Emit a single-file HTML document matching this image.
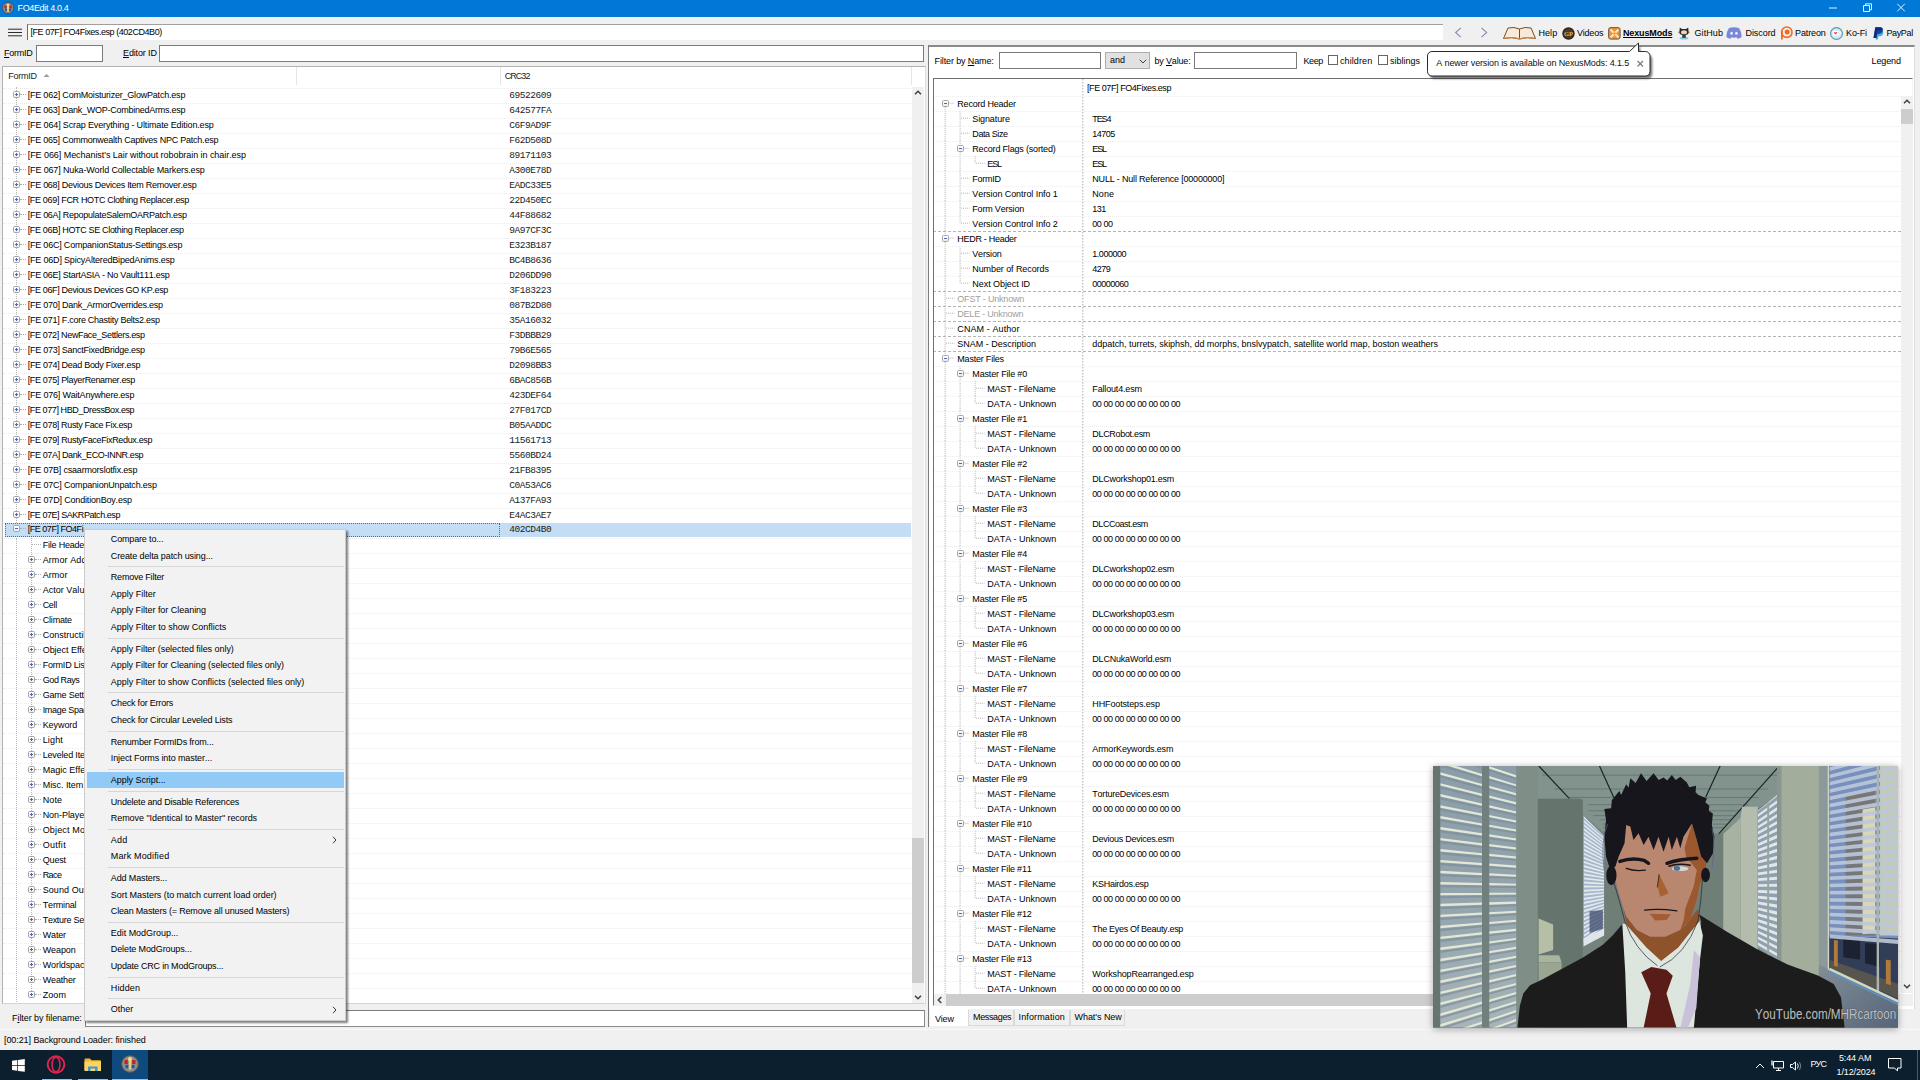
<!DOCTYPE html><html><head><meta charset="utf-8"><title>FO4Edit 4.0.4</title><style>
*{box-sizing:border-box;margin:0;padding:0}
html,body{width:1920px;height:1080px;overflow:hidden;background:#f0f0f0}
body{position:relative;font-family:"Liberation Sans",sans-serif;font-size:9px;color:#000;line-height:15px;font-kerning:none}
div,span,i,svg,u,b{position:absolute;white-space:nowrap}
u{position:static}
i{display:block;font-style:normal}
#title{left:0;top:0;width:1920px;height:17px;background:#0078d7;color:#fff}
#title span{left:17.5px;top:1px;font-size:9px}
.inp{background:#fff;border:1px solid #7a7a7a}
/* left tree */
#ltree{left:2px;top:66px;width:923.5px;height:937.5px;background:#fff;border:1px solid #b2b2b2;border-right-color:#dcdcdc;border-bottom-color:#d4d4d4;overflow:hidden}
#ltree .lhdr{left:0;top:0;width:921px;height:20px;background:#fff}
.lhdr span{top:2.3px;color:#222}
.lhdr .sort{left:40px;top:6.8px}
.lhdr .hs{top:0;width:1px;height:18px;background:#e5e5e5}
.lbody{left:-3px;top:-67px;width:923px;height:1004px}
.lr{left:3px;width:908px;height:15px;border-top:1px dotted #ececec}
.lr .t{top:-0.5px}
.lr .c{left:506.3px;top:-0.5px;font-family:"Liberation Mono",monospace;font-size:9.5px;letter-spacing:-0.45px;color:#222}
.lr.sel{background:#c3ddf4;border:0;left:4.5px;width:906.5px;height:14.5px;margin-top:.25px}
.lr.sel .fr{left:0;top:0;width:495.5px;height:14.5px;border:1px dotted #666}
.ex{z-index:2;width:7.3px;height:7.3px;border:1px solid #a4a4a4;background:linear-gradient(#fff,#ececec);border-radius:1.5px}
.ex .h{left:1.1px;top:2.1px;width:3.1px;height:1.1px;background:#4f66ad}
.ex .v{left:2.1px;top:1.1px;width:1.1px;height:3.1px;background:#4f66ad}
.dl{top:7px;height:1px;border-top:1px dotted #b0b0b0}
/* right */
#rpanel{left:928.2px;top:45px;width:986.8px;height:963.5px;background:#fff;border-left:1.2px solid #7c7c7c;border-top:2px solid #8a8a8a;border-right:1px solid #dedede}
#rpl{left:928.2px;top:1008px;width:1.2px;height:18.5px;background:#7c7c7c}
#rtree{left:932.5px;top:78px;width:980.5px;height:928px;background:#fff;border:1px solid #6e6e6e;overflow:hidden;border-right-color:#f4f4f4;border-bottom-color:#fff}
.rhdr{left:0;top:0;width:966px;height:17px}
.rhdr span{left:153.5px;top:2px}
.rr{left:-1px;width:968px;height:15px;margin-top:-79px;border-top:1px dotted #eeeeee}
.rr.d{border-top:1px dashed #b4b4b4}
.rr .n{top:0}
.rr .v{left:159.8px;top:0}
.rr.g .n{color:#a0a0a0}
/* menu */
#menu{left:83.5px;top:528.75px;width:262.5px;height:492px;background:#f2f2f2;border:1px solid #ccc;box-shadow:1.5px 1.5px 2px rgba(0,0,0,.5)}
.mi{left:2px;width:257px;height:16.5px;line-height:16.5px}
.mi span{left:24.3px;top:0}
.mi.hot{background:#91c9f7}
.mi .ar{left:245px;top:4.5px}
.sep{left:23px;width:236px;height:1px;background:#d7d7d7}
#addr{left:27px;top:23.5px;width:1416px;height:16px;background:#fff;border-left:1px solid #696969;border-top:1px solid #a0a0a0}
#addr span{left:2.5px;top:0}
#links span{top:25.8px}
.combo{background:#e1e1e1;border:1px solid #adadad}
.combo span{left:4px;top:0}
.cb{width:10px;height:10px;background:#fff;border:1px solid #666}
.sb{background:#f0f0f0}
.tab{top:1009.500px;height:16px;border:1px solid #d9d9d9;border-top:0;background:#f0f0f0}
.tab span{left:4px;top:0}
.tab.act{background:#fff;border-color:#fff;top:1008px;height:18px}
.tab.act span{top:3.8px}
#tb{left:0;top:1050px;width:1920px;height:30px;background:#0b1f2f}
.vl{width:1px;border-left:1px dotted #b8b8b8}

</style></head><body>
<div id="title">
<svg style="left:2px;top:2px" width="12" height="12" viewBox="0 0 12 12"><circle cx="6" cy="6" r="5.6" fill="#8c8c84" stroke="#4a4a46" stroke-width=".8"/><rect x="5" y="2.2" width="2" height="7.5" fill="#e8d37a"/><circle cx="6" cy="2.8" r="1.3" fill="#f0dc8c"/><rect x="2.4" y="3.6" width="2.2" height="2.6" fill="#c8202a"/><rect x="7.6" y="3.6" width="2.2" height="2.6" fill="#c8202a"/><rect x="3" y="6.6" width="2" height="2.2" fill="#2f4fa8"/><rect x="7.2" y="6.6" width="2" height="2.2" fill="#2f4fa8"/></svg>
<span style="letter-spacing:-0.348px">FO4Edit 4.0.4</span>
<svg style="left:1826px;top:0" width="84" height="17" viewBox="0 0 84 17"><g fill="none" stroke="#fff" stroke-width=".9"><path d="M3 8h8"/><path d="M37.5 5.5h6v6h-6z M39.5 5.5v-1.7h6v6h-1.8"/><path d="M71.3 3.8l7.5 7.5M78.8 3.8l-7.5 7.5"/></g></svg>
</div>
<!-- toolbar -->
<svg style="left:8px;top:28px" width="15" height="9" viewBox="0 0 15 9"><path d="M0 1.2h14M0 4.5h14M0 7.8h14" stroke="#2b2b2b" stroke-width="1"/></svg>
<div id="addr"><span style="letter-spacing:-0.447px">[FE 07F] FO4Fixes.esp (402CD4B0)</span></div>
<svg style="left:1453px;top:26px" width="40" height="13" viewBox="0 0 40 13"><g fill="none" stroke="#8a88a8" stroke-width="1.1"><path d="M7.8 1.8L2.6 6.5l5.200 4.700"/><path d="M28.500 1.800l5.200 4.700-5.200 4.700"/></g></svg>
<div id="links">
<svg style="left:1503px;top:26px" width="33" height="14" viewBox="0 0 33 14"><path d="M0.5 12.5 L5 2 Q11 0.5 16.5 3 Q22 0.5 28 2 L32.5 12.5 Q24 10.5 16.5 13 Q9 10.5 0.5 12.5Z" fill="#f7ead9" stroke="#7a4a22" stroke-width="1"/><path d="M16.5 3v10" stroke="#7a4a22" stroke-width="1"/><path d="M1.5 12.3Q9 10.6 16.5 12.8Q24 10.6 31.5 12.3" fill="none" stroke="#c98c50" stroke-width="1.2"/></svg>
<span style="letter-spacing:0.060px;left:1538.5px">Help</span>
<svg style="left:1562px;top:26.5px" width="13" height="13" viewBox="0 0 13 13"><circle cx="6.5" cy="6.5" r="6.2" fill="#2e2620"/><circle cx="6.5" cy="6.5" r="4.8" fill="#4a3a26"/><text x="6.5" y="9" font-size="6.5" font-family="Liberation Serif,serif" font-weight="bold" fill="#d9b25a" text-anchor="middle">GP</text></svg>
<span style="letter-spacing:-0.211px;left:1577px">Videos</span>
<svg style="left:1607.5px;top:27px" width="13" height="13" viewBox="0 0 13 13"><rect x=".6" y=".6" width="11.5" height="11.5" rx="2" fill="#f0922e" stroke="#6b5a48" stroke-width="1"/><path d="M2.5 2.5l8 8M10.5 2.5l-8 8" stroke="#fbe3c4" stroke-width="2"/><circle cx="6.5" cy="6.5" r="1.2" fill="#f0922e"/></svg>
<span style="left:1623px;font-weight:bold;text-decoration:underline;letter-spacing:-0.14px" class="nb">NexusMods</span>
<svg style="left:1676.5px;top:26px" width="14" height="14" viewBox="0 0 14 14"><ellipse cx="7" cy="12.3" rx="4.5" ry="1.3" fill="#7cc7ea"/><path d="M2.8 1.5l2 1.6h4.4l2-1.6.3 3.2q.8 2.7-1.5 4H4q-2.3-1.3-1.5-4z" fill="#2a2626"/><ellipse cx="7" cy="6.2" rx="3" ry="2" fill="#f3d2b4"/><rect x="5.2" y="8.2" width="3.6" height="3.6" fill="#3a3a3a"/><path d="M1 6l2 1M13 6l-2 1" stroke="#555" stroke-width=".6"/></svg>
<span style="letter-spacing:0.082px;left:1694.5px">GitHub</span>
<svg style="left:1726px;top:27px" width="16" height="12" viewBox="0 0 16 12"><path d="M3 1Q8 -0.6 13 1Q15.8 5 15.6 10Q13.5 11.8 11.5 11.8L10.6 10.3Q8 11 5.4 10.3L4.5 11.8Q2.5 11.8 .4 10Q.2 5 3 1Z" fill="#7a86d8"/><ellipse cx="5.6" cy="6.3" rx="1.3" ry="1.5" fill="#eef"/><ellipse cx="10.4" cy="6.3" rx="1.3" ry="1.5" fill="#eef"/></svg>
<span style="letter-spacing:-0.072px;left:1745.5px">Discord</span>
<svg style="left:1779.5px;top:26px" width="13" height="14" viewBox="0 0 13 14"><circle cx="6.8" cy="6.2" r="5.2" fill="none" stroke="#f4691f" stroke-width="1.6"/><rect x="1" y="5" width="1.8" height="8.5" fill="#f4691f"/><circle cx="7.2" cy="6" r="2.5" fill="#f4691f"/></svg>
<span style="letter-spacing:-0.110px;left:1795px">Patreon</span>
<svg style="left:1830px;top:26.5px" width="13" height="13" viewBox="0 0 13 13"><circle cx="6.5" cy="6.5" r="5.9" fill="#d6ebf3" stroke="#4d9dbd" stroke-width="1.2"/><rect x="2.8" y="4" width="5.6" height="4.6" rx=".8" fill="#fff"/><path d="M8.4 4.8h1.2q1 0 1 1.3t-1 1.3H8.4" fill="none" stroke="#fff" stroke-width=".9"/><path d="M5.6 7.6L3.9 6Q3.6 5 4.6 4.9L5.6 5.5 6.6 4.9Q7.6 5 7.3 6Z" fill="#f0495a"/></svg>
<span style="letter-spacing:-0.100px;left:1846px">Ko-Fi</span>
<svg style="left:1873px;top:26.5px" width="11" height="13" viewBox="0 0 11 13"><path d="M2.3 0.3h4.8q3 0 2.6 3-0.6 3.4-4 3.4H4.4l-.8 4.2H.5z" fill="#102a83"/><path d="M4.4 3.3h3.8q2.6.2 2 3-0.7 3-3.6 3H5.4l-.6 3.2H2.6l.7-3.6z" fill="#1f9ddd" opacity=".85"/><path d="M2.3 0.3h4.8q3 0 2.6 3-0.6 3.4-4 3.4H4.4l-.8 4.2H.5z" fill="#102a83" opacity=".75"/></svg>
<span style="letter-spacing:-0.378px;left:1886.5px">PayPal</span>
</div>
<!-- FormID / EditorID -->
<span style="letter-spacing:-0.250px;left:4px;top:46px"><u>F</u>ormID</span>
<div class="inp" style="left:36px;top:45px;width:67px;height:17px"></div>
<span style="letter-spacing:-0.140px;left:123px;top:46px"><u>E</u>ditor ID</span>
<div class="inp" style="left:159px;top:45px;width:765px;height:17px"></div>
<div id="rpanel"></div><i id="rpl"></i>

<div id="ltree">
<div class="lhdr"><span style="letter-spacing:-0.250px;left:5.3px">FormID</span><svg class="sort" width="7" height="3.5" viewBox="0 0 8 4"><path d="M0 4 L4 0 L8 4 Z" fill="#9a9a9a"/></svg><i class="hs" style="left:293px"></i><i class="hs" style="left:497px"></i><span style="letter-spacing:-0.952px;left:501.7px">CRC32</span><i class="hs" style="left:908px"></i></div>
<div class="lbody">
<div class="lr" style="top:87.5px"><div class="ex" style="left:9.5px;top:2.5px"><i class="h"></i><i class="v"></i></div><i class="dl" style="left:17px;width:6px;top:5.5px"></i><span class="t" style="letter-spacing:-0.204px;left:24.7px">[FE 062] ComMoisturizer_GlowPatch.esp</span><span class="c">69522609</span></div>
<div class="lr" style="top:102.5px"><div class="ex" style="left:9.5px;top:2.5px"><i class="h"></i><i class="v"></i></div><i class="dl" style="left:17px;width:6px;top:5.5px"></i><span class="t" style="letter-spacing:-0.252px;left:24.7px">[FE 063] Dank_WOP-CombinedArms.esp</span><span class="c">642577FA</span></div>
<div class="lr" style="top:117.5px"><div class="ex" style="left:9.5px;top:2.5px"><i class="h"></i><i class="v"></i></div><i class="dl" style="left:17px;width:6px;top:5.5px"></i><span class="t" style="letter-spacing:-0.148px;left:24.7px">[FE 064] Scrap Everything - Ultimate Edition.esp</span><span class="c">C6F9AD9F</span></div>
<div class="lr" style="top:132.5px"><div class="ex" style="left:9.5px;top:2.5px"><i class="h"></i><i class="v"></i></div><i class="dl" style="left:17px;width:6px;top:5.5px"></i><span class="t" style="letter-spacing:-0.229px;left:24.7px">[FE 065] Commonwealth Captives NPC Patch.esp</span><span class="c">F62D508D</span></div>
<div class="lr" style="top:147.5px"><div class="ex" style="left:9.5px;top:2.5px"><i class="h"></i><i class="v"></i></div><i class="dl" style="left:17px;width:6px;top:5.5px"></i><span class="t" style="letter-spacing:-0.055px;left:24.7px">[FE 066] Mechanist&#x27;s Lair without robobrain in chair.esp</span><span class="c">89171103</span></div>
<div class="lr" style="top:162.5px"><div class="ex" style="left:9.5px;top:2.5px"><i class="h"></i><i class="v"></i></div><i class="dl" style="left:17px;width:6px;top:5.5px"></i><span class="t" style="letter-spacing:-0.141px;left:24.7px">[FE 067] Nuka-World Collectable Markers.esp</span><span class="c">A300E78D</span></div>
<div class="lr" style="top:177.5px"><div class="ex" style="left:9.5px;top:2.5px"><i class="h"></i><i class="v"></i></div><i class="dl" style="left:17px;width:6px;top:5.5px"></i><span class="t" style="letter-spacing:-0.264px;left:24.7px">[FE 068] Devious Devices Item Remover.esp</span><span class="c">EADC33E5</span></div>
<div class="lr" style="top:192.5px"><div class="ex" style="left:9.5px;top:2.5px"><i class="h"></i><i class="v"></i></div><i class="dl" style="left:17px;width:6px;top:5.5px"></i><span class="t" style="letter-spacing:-0.329px;left:24.7px">[FE 069] FCR HOTC Clothing Replacer.esp</span><span class="c">22D450EC</span></div>
<div class="lr" style="top:207.5px"><div class="ex" style="left:9.5px;top:2.5px"><i class="h"></i><i class="v"></i></div><i class="dl" style="left:17px;width:6px;top:5.5px"></i><span class="t" style="letter-spacing:-0.266px;left:24.7px">[FE 06A] RepopulateSalemOARPatch.esp</span><span class="c">44F88682</span></div>
<div class="lr" style="top:222.5px"><div class="ex" style="left:9.5px;top:2.5px"><i class="h"></i><i class="v"></i></div><i class="dl" style="left:17px;width:6px;top:5.5px"></i><span class="t" style="letter-spacing:-0.331px;left:24.7px">[FE 06B] HOTC SE Clothing Replacer.esp</span><span class="c">9A97CF3C</span></div>
<div class="lr" style="top:237.5px"><div class="ex" style="left:9.5px;top:2.5px"><i class="h"></i><i class="v"></i></div><i class="dl" style="left:17px;width:6px;top:5.5px"></i><span class="t" style="letter-spacing:-0.205px;left:24.7px">[FE 06C] CompanionStatus-Settings.esp</span><span class="c">E323B187</span></div>
<div class="lr" style="top:252.5px"><div class="ex" style="left:9.5px;top:2.5px"><i class="h"></i><i class="v"></i></div><i class="dl" style="left:17px;width:6px;top:5.5px"></i><span class="t" style="letter-spacing:-0.188px;left:24.7px">[FE 06D] SpicyAlteredBipedAnims.esp</span><span class="c">BC4B8636</span></div>
<div class="lr" style="top:267.5px"><div class="ex" style="left:9.5px;top:2.5px"><i class="h"></i><i class="v"></i></div><i class="dl" style="left:17px;width:6px;top:5.5px"></i><span class="t" style="letter-spacing:-0.273px;left:24.7px">[FE 06E] StartASIA - No Vault111.esp</span><span class="c">D206DD90</span></div>
<div class="lr" style="top:282.5px"><div class="ex" style="left:9.5px;top:2.5px"><i class="h"></i><i class="v"></i></div><i class="dl" style="left:17px;width:6px;top:5.5px"></i><span class="t" style="letter-spacing:-0.347px;left:24.7px">[FE 06F] Devious Devices GO KP.esp</span><span class="c">3F183223</span></div>
<div class="lr" style="top:297.5px"><div class="ex" style="left:9.5px;top:2.5px"><i class="h"></i><i class="v"></i></div><i class="dl" style="left:17px;width:6px;top:5.5px"></i><span class="t" style="letter-spacing:-0.252px;left:24.7px">[FE 070] Dank_ArmorOverrides.esp</span><span class="c">087B2D80</span></div>
<div class="lr" style="top:312.5px"><div class="ex" style="left:9.5px;top:2.5px"><i class="h"></i><i class="v"></i></div><i class="dl" style="left:17px;width:6px;top:5.5px"></i><span class="t" style="letter-spacing:-0.273px;left:24.7px">[FE 071] F.core Chastity Belts2.esp</span><span class="c">35A16032</span></div>
<div class="lr" style="top:327.5px"><div class="ex" style="left:9.5px;top:2.5px"><i class="h"></i><i class="v"></i></div><i class="dl" style="left:17px;width:6px;top:5.5px"></i><span class="t" style="letter-spacing:-0.347px;left:24.7px">[FE 072] NewFace_Settlers.esp</span><span class="c">F3DBBB29</span></div>
<div class="lr" style="top:342.5px"><div class="ex" style="left:9.5px;top:2.5px"><i class="h"></i><i class="v"></i></div><i class="dl" style="left:17px;width:6px;top:5.5px"></i><span class="t" style="letter-spacing:-0.261px;left:24.7px">[FE 073] SanctFixedBridge.esp</span><span class="c">79B6E565</span></div>
<div class="lr" style="top:357.5px"><div class="ex" style="left:9.5px;top:2.5px"><i class="h"></i><i class="v"></i></div><i class="dl" style="left:17px;width:6px;top:5.5px"></i><span class="t" style="letter-spacing:-0.288px;left:24.7px">[FE 074] Dead Body Fixer.esp</span><span class="c">D2098BB3</span></div>
<div class="lr" style="top:372.5px"><div class="ex" style="left:9.5px;top:2.5px"><i class="h"></i><i class="v"></i></div><i class="dl" style="left:17px;width:6px;top:5.5px"></i><span class="t" style="letter-spacing:-0.339px;left:24.7px">[FE 075] PlayerRenamer.esp</span><span class="c">6BAC856B</span></div>
<div class="lr" style="top:387.5px"><div class="ex" style="left:9.5px;top:2.5px"><i class="h"></i><i class="v"></i></div><i class="dl" style="left:17px;width:6px;top:5.5px"></i><span class="t" style="letter-spacing:-0.202px;left:24.7px">[FE 076] WaitAnywhere.esp</span><span class="c">423DEF64</span></div>
<div class="lr" style="top:402.5px"><div class="ex" style="left:9.5px;top:2.5px"><i class="h"></i><i class="v"></i></div><i class="dl" style="left:17px;width:6px;top:5.5px"></i><span class="t" style="letter-spacing:-0.402px;left:24.7px">[FE 077] HBD_DressBox.esp</span><span class="c">27F017CD</span></div>
<div class="lr" style="top:417.5px"><div class="ex" style="left:9.5px;top:2.5px"><i class="h"></i><i class="v"></i></div><i class="dl" style="left:17px;width:6px;top:5.5px"></i><span class="t" style="letter-spacing:-0.344px;left:24.7px">[FE 078] Rusty Face Fix.esp</span><span class="c">B05AADDC</span></div>
<div class="lr" style="top:432.5px"><div class="ex" style="left:9.5px;top:2.5px"><i class="h"></i><i class="v"></i></div><i class="dl" style="left:17px;width:6px;top:5.5px"></i><span class="t" style="letter-spacing:-0.335px;left:24.7px">[FE 079] RustyFaceFixRedux.esp</span><span class="c">11561713</span></div>
<div class="lr" style="top:447.5px"><div class="ex" style="left:9.5px;top:2.5px"><i class="h"></i><i class="v"></i></div><i class="dl" style="left:17px;width:6px;top:5.5px"></i><span class="t" style="letter-spacing:-0.367px;left:24.7px">[FE 07A] Dank_ECO-INNR.esp</span><span class="c">5560BD24</span></div>
<div class="lr" style="top:462.5px"><div class="ex" style="left:9.5px;top:2.5px"><i class="h"></i><i class="v"></i></div><i class="dl" style="left:17px;width:6px;top:5.5px"></i><span class="t" style="letter-spacing:-0.198px;left:24.7px">[FE 07B] csaarmorslotfix.esp</span><span class="c">21FB8395</span></div>
<div class="lr" style="top:477.5px"><div class="ex" style="left:9.5px;top:2.5px"><i class="h"></i><i class="v"></i></div><i class="dl" style="left:17px;width:6px;top:5.5px"></i><span class="t" style="letter-spacing:-0.192px;left:24.7px">[FE 07C] CompanionUnpatch.esp</span><span class="c">C0A53AC6</span></div>
<div class="lr" style="top:492.5px"><div class="ex" style="left:9.5px;top:2.5px"><i class="h"></i><i class="v"></i></div><i class="dl" style="left:17px;width:6px;top:5.5px"></i><span class="t" style="letter-spacing:-0.172px;left:24.7px">[FE 07D] ConditionBoy.esp</span><span class="c">A137FA93</span></div>
<div class="lr" style="top:507.5px"><div class="ex" style="left:9.5px;top:2.5px"><i class="h"></i><i class="v"></i></div><i class="dl" style="left:17px;width:6px;top:5.5px"></i><span class="t" style="letter-spacing:-0.445px;left:24.7px">[FE 07E] SAKRPatch.esp</span><span class="c">E4AC3AE7</span></div>
<div class="lr sel" style="top:522.5px"><i class="fr"></i><div class="ex" style="left:8px;top:2.25px"><i class="h"></i></div><i class="dl" style="left:15.5px;width:6px;top:5.25px"></i><span class="t" style="letter-spacing:-0.465px;left:23.2px;top:-.75px">[FE 07F] FO4Fi</span><span class="c" style="left:504.8px;top:-.75px">402CD4B0</span></div>
<div class="lr" style="top:537.5px"><i class="dl" style="left:28px;width:10px;top:5.5px"></i><span class="t" style="letter-spacing:-0.206px;left:39.7px">File Header</span></div>
<div class="lr" style="top:552.5px"><div class="ex" style="left:24.5px;top:2.5px"><i class="h"></i><i class="v"></i></div><i class="dl" style="left:32px;width:6px;top:5.5px"></i><span class="t" style="letter-spacing:0.089px;left:39.7px">Armor Addon</span></div>
<div class="lr" style="top:567.5px"><div class="ex" style="left:24.5px;top:2.5px"><i class="h"></i><i class="v"></i></div><i class="dl" style="left:32px;width:6px;top:5.5px"></i><span class="t" style="letter-spacing:0.050px;left:39.7px">Armor</span></div>
<div class="lr" style="top:582.5px"><div class="ex" style="left:24.5px;top:2.5px"><i class="h"></i><i class="v"></i></div><i class="dl" style="left:32px;width:6px;top:5.5px"></i><span class="t" style="letter-spacing:0.020px;left:39.7px">Actor Value Information</span></div>
<div class="lr" style="top:597.5px"><div class="ex" style="left:24.5px;top:2.5px"><i class="h"></i><i class="v"></i></div><i class="dl" style="left:32px;width:6px;top:5.5px"></i><span class="t" style="letter-spacing:-0.313px;left:39.7px">Cell</span></div>
<div class="lr" style="top:612.5px"><div class="ex" style="left:24.5px;top:2.5px"><i class="h"></i><i class="v"></i></div><i class="dl" style="left:32px;width:6px;top:5.5px"></i><span class="t" style="letter-spacing:-0.180px;left:39.7px">Climate</span></div>
<div class="lr" style="top:627.5px"><div class="ex" style="left:24.5px;top:2.5px"><i class="h"></i><i class="v"></i></div><i class="dl" style="left:32px;width:6px;top:5.5px"></i><span class="t" style="letter-spacing:-0.002px;left:39.7px">Constructible Object</span></div>
<div class="lr" style="top:642.5px"><div class="ex" style="left:24.5px;top:2.5px"><i class="h"></i><i class="v"></i></div><i class="dl" style="left:32px;width:6px;top:5.5px"></i><span class="t" style="letter-spacing:-0.040px;left:39.7px">Object Effect</span></div>
<div class="lr" style="top:657.5px"><div class="ex" style="left:24.5px;top:2.5px"><i class="h"></i><i class="v"></i></div><i class="dl" style="left:32px;width:6px;top:5.5px"></i><span class="t" style="letter-spacing:-0.205px;left:39.7px">FormID List</span></div>
<div class="lr" style="top:672.5px"><div class="ex" style="left:24.5px;top:2.5px"><i class="h"></i><i class="v"></i></div><i class="dl" style="left:32px;width:6px;top:5.5px"></i><span class="t" style="letter-spacing:-0.408px;left:39.7px">God Rays</span></div>
<div class="lr" style="top:687.5px"><div class="ex" style="left:24.5px;top:2.5px"><i class="h"></i><i class="v"></i></div><i class="dl" style="left:32px;width:6px;top:5.5px"></i><span class="t" style="letter-spacing:-0.211px;left:39.7px">Game Setting</span></div>
<div class="lr" style="top:702.5px"><div class="ex" style="left:24.5px;top:2.5px"><i class="h"></i><i class="v"></i></div><i class="dl" style="left:32px;width:6px;top:5.5px"></i><span class="t" style="letter-spacing:-0.321px;left:39.7px">Image Space</span></div>
<div class="lr" style="top:717.5px"><div class="ex" style="left:24.5px;top:2.5px"><i class="h"></i><i class="v"></i></div><i class="dl" style="left:32px;width:6px;top:5.5px"></i><span class="t" style="letter-spacing:-0.074px;left:39.7px">Keyword</span></div>
<div class="lr" style="top:732.5px"><div class="ex" style="left:24.5px;top:2.5px"><i class="h"></i><i class="v"></i></div><i class="dl" style="left:32px;width:6px;top:5.5px"></i><span class="t" style="letter-spacing:0.147px;left:39.7px">Light</span></div>
<div class="lr" style="top:747.5px"><div class="ex" style="left:24.5px;top:2.5px"><i class="h"></i><i class="v"></i></div><i class="dl" style="left:32px;width:6px;top:5.5px"></i><span class="t" style="letter-spacing:-0.169px;left:39.7px">Leveled Item</span></div>
<div class="lr" style="top:762.5px"><div class="ex" style="left:24.5px;top:2.5px"><i class="h"></i><i class="v"></i></div><i class="dl" style="left:32px;width:6px;top:5.5px"></i><span class="t" style="letter-spacing:-0.001px;left:39.7px">Magic Effect</span></div>
<div class="lr" style="top:777.5px"><div class="ex" style="left:24.5px;top:2.5px"><i class="h"></i><i class="v"></i></div><i class="dl" style="left:32px;width:6px;top:5.5px"></i><span class="t" style="letter-spacing:-0.050px;left:39.7px">Misc. Item</span></div>
<div class="lr" style="top:792.5px"><div class="ex" style="left:24.5px;top:2.5px"><i class="h"></i><i class="v"></i></div><i class="dl" style="left:32px;width:6px;top:5.5px"></i><span class="t" style="letter-spacing:0.122px;left:39.7px">Note</span></div>
<div class="lr" style="top:807.5px"><div class="ex" style="left:24.5px;top:2.5px"><i class="h"></i><i class="v"></i></div><i class="dl" style="left:32px;width:6px;top:5.5px"></i><span class="t" style="letter-spacing:-0.064px;left:39.7px">Non-Player Character (Actor)</span></div>
<div class="lr" style="top:822.5px"><div class="ex" style="left:24.5px;top:2.5px"><i class="h"></i><i class="v"></i></div><i class="dl" style="left:32px;width:6px;top:5.5px"></i><span class="t" style="letter-spacing:0.156px;left:39.7px">Object Modification</span></div>
<div class="lr" style="top:837.5px"><div class="ex" style="left:24.5px;top:2.5px"><i class="h"></i><i class="v"></i></div><i class="dl" style="left:32px;width:6px;top:5.5px"></i><span class="t" style="letter-spacing:0.291px;left:39.7px">Outfit</span></div>
<div class="lr" style="top:852.5px"><div class="ex" style="left:24.5px;top:2.5px"><i class="h"></i><i class="v"></i></div><i class="dl" style="left:32px;width:6px;top:5.5px"></i><span class="t" style="letter-spacing:-0.152px;left:39.7px">Quest</span></div>
<div class="lr" style="top:867.5px"><div class="ex" style="left:24.5px;top:2.5px"><i class="h"></i><i class="v"></i></div><i class="dl" style="left:32px;width:6px;top:5.5px"></i><span class="t" style="letter-spacing:-0.565px;left:39.7px">Race</span></div>
<div class="lr" style="top:882.5px"><div class="ex" style="left:24.5px;top:2.5px"><i class="h"></i><i class="v"></i></div><i class="dl" style="left:32px;width:6px;top:5.5px"></i><span class="t" style="letter-spacing:0.080px;left:39.7px">Sound Output Model</span></div>
<div class="lr" style="top:897.5px"><div class="ex" style="left:24.5px;top:2.5px"><i class="h"></i><i class="v"></i></div><i class="dl" style="left:32px;width:6px;top:5.5px"></i><span class="t" style="letter-spacing:-0.157px;left:39.7px">Terminal</span></div>
<div class="lr" style="top:912.5px"><div class="ex" style="left:24.5px;top:2.5px"><i class="h"></i><i class="v"></i></div><i class="dl" style="left:32px;width:6px;top:5.5px"></i><span class="t" style="letter-spacing:-0.275px;left:39.7px">Texture Set</span></div>
<div class="lr" style="top:927.5px"><div class="ex" style="left:24.5px;top:2.5px"><i class="h"></i><i class="v"></i></div><i class="dl" style="left:32px;width:6px;top:5.5px"></i><span class="t" style="letter-spacing:-0.151px;left:39.7px">Water</span></div>
<div class="lr" style="top:942.5px"><div class="ex" style="left:24.5px;top:2.5px"><i class="h"></i><i class="v"></i></div><i class="dl" style="left:32px;width:6px;top:5.5px"></i><span class="t" style="letter-spacing:-0.087px;left:39.7px">Weapon</span></div>
<div class="lr" style="top:957.5px"><div class="ex" style="left:24.5px;top:2.5px"><i class="h"></i><i class="v"></i></div><i class="dl" style="left:32px;width:6px;top:5.5px"></i><span class="t" style="letter-spacing:-0.102px;left:39.7px">Worldspace</span></div>
<div class="lr" style="top:972.5px"><div class="ex" style="left:24.5px;top:2.5px"><i class="h"></i><i class="v"></i></div><i class="dl" style="left:32px;width:6px;top:5.5px"></i><span class="t" style="letter-spacing:-0.145px;left:39.7px">Weather</span></div>
<div class="lr" style="top:987.5px"><div class="ex" style="left:24.5px;top:2.5px"><i class="h"></i><i class="v"></i></div><i class="dl" style="left:32px;width:6px;top:5.5px"></i><span class="t" style="letter-spacing:0.061px;left:39.7px">Zoom</span></div>
<i class="vl" style="left:15.5px;top:87px;height:436px"></i><i class="vl" style="left:15.5px;top:537.5px;height:470px"></i><i class="vl" style="left:30.5px;top:537.5px;height:455px"></i>
</div>
</div>
<div id="rtree">
<div class="rhdr"><span style="letter-spacing:-0.430px">[FE 07F] FO4Fixes.esp</span></div>
<svg class="tl" width="966" height="916" style="left:0;top:0"><path d="M11.1 24.2V20.8M11.1 27.8V31.8M15.6 24.2H20.1M26.1 31.8V46.8M27.1 39.2H35.6M11.1 31.8V46.8M26.1 46.8V61.8M27.1 54.2H35.6M11.1 46.8V61.8M26.1 61.8V65.8M26.1 72.8V76.8M30.6 69.2H35.1M11.1 61.8V76.8M41.1 76.8V84.2M42.1 84.2H50.6M26.1 76.8V91.8M11.1 76.8V91.8M26.1 91.8V106.8M27.1 99.2H35.6M11.1 91.8V106.8M26.1 106.8V121.8M27.1 114.2H35.6M11.1 106.8V121.8M26.1 121.8V136.8M27.1 129.2H35.6M11.1 121.8V136.8M26.1 136.8V144.2M27.1 144.2H35.6M11.1 136.8V151.8M11.1 151.8V155.8M11.1 162.8V166.8M15.6 159.2H20.1M26.1 166.8V181.8M27.1 174.2H35.6M11.1 166.8V181.8M26.1 181.8V196.8M27.1 189.2H35.6M11.1 181.8V196.8M26.1 196.8V204.2M27.1 204.2H35.6M11.1 196.8V211.8M11.1 211.8V226.8M12.1 219.2H20.6M11.1 226.8V241.8M12.1 234.2H20.6M11.1 241.8V256.8M12.1 249.2H20.6M11.1 256.8V271.8M12.1 264.2H20.6M11.1 271.8V275.8M11.1 282.8V286.8M15.6 279.2H20.1M26.1 286.8V290.8M26.1 297.8V301.8M30.6 294.2H35.1M11.1 286.8V301.8M41.1 301.8V316.8M42.1 309.2H50.6M26.1 301.8V316.8M11.1 301.8V316.8M41.1 316.8V324.2M42.1 324.2H50.6M26.1 316.8V331.8M11.1 316.8V331.8M26.1 331.8V335.8M26.1 342.8V346.8M30.6 339.2H35.1M11.1 331.8V346.8M41.1 346.8V361.8M42.1 354.2H50.6M26.1 346.8V361.8M11.1 346.8V361.8M41.1 361.8V369.2M42.1 369.2H50.6M26.1 361.8V376.8M11.1 361.8V376.8M26.1 376.8V380.8M26.1 387.8V391.8M30.6 384.2H35.1M11.1 376.8V391.8M41.1 391.8V406.8M42.1 399.2H50.6M26.1 391.8V406.8M11.1 391.8V406.8M41.1 406.8V414.2M42.1 414.2H50.6M26.1 406.8V421.8M11.1 406.8V421.8M26.1 421.8V425.8M26.1 432.8V436.8M30.6 429.2H35.1M11.1 421.8V436.8M41.1 436.8V451.8M42.1 444.2H50.6M26.1 436.8V451.8M11.1 436.8V451.8M41.1 451.8V459.2M42.1 459.2H50.6M26.1 451.8V466.8M11.1 451.8V466.8M26.1 466.8V470.8M26.1 477.8V481.8M30.6 474.2H35.1M11.1 466.8V481.8M41.1 481.8V496.8M42.1 489.2H50.6M26.1 481.8V496.8M11.1 481.8V496.8M41.1 496.8V504.2M42.1 504.2H50.6M26.1 496.8V511.8M11.1 496.8V511.8M26.1 511.8V515.8M26.1 522.8V526.8M30.6 519.2H35.1M11.1 511.8V526.8M41.1 526.8V541.8M42.1 534.2H50.6M26.1 526.8V541.8M11.1 526.8V541.8M41.1 541.8V549.2M42.1 549.2H50.6M26.1 541.8V556.8M11.1 541.8V556.8M26.1 556.8V560.8M26.1 567.8V571.8M30.6 564.2H35.1M11.1 556.8V571.8M41.1 571.8V586.8M42.1 579.2H50.6M26.1 571.8V586.8M11.1 571.8V586.8M41.1 586.8V594.2M42.1 594.2H50.6M26.1 586.8V601.8M11.1 586.8V601.8M26.1 601.8V605.8M26.1 612.8V616.8M30.6 609.2H35.1M11.1 601.8V616.8M41.1 616.8V631.8M42.1 624.2H50.6M26.1 616.8V631.8M11.1 616.8V631.8M41.1 631.8V639.2M42.1 639.2H50.6M26.1 631.8V646.8M11.1 631.8V646.8M26.1 646.8V650.8M26.1 657.8V661.8M30.6 654.2H35.1M11.1 646.8V661.8M41.1 661.8V676.8M42.1 669.2H50.6M26.1 661.8V676.8M11.1 661.8V676.8M41.1 676.8V684.2M42.1 684.2H50.6M26.1 676.8V691.8M11.1 676.8V691.8M26.1 691.8V695.8M26.1 702.8V706.8M30.6 699.2H35.1M11.1 691.8V706.8M41.1 706.8V721.8M42.1 714.2H50.6M26.1 706.8V721.8M11.1 706.8V721.8M41.1 721.8V729.2M42.1 729.2H50.6M26.1 721.8V736.8M11.1 721.8V736.8M26.1 736.8V740.8M26.1 747.8V751.8M30.6 744.2H35.1M11.1 736.8V751.8M41.1 751.8V766.8M42.1 759.2H50.6M26.1 751.8V766.8M11.1 751.8V766.8M41.1 766.8V774.2M42.1 774.2H50.6M26.1 766.8V781.8M11.1 766.8V781.8M26.1 781.8V785.8M26.1 792.8V796.8M30.6 789.2H35.1M11.1 781.8V796.8M41.1 796.8V811.8M42.1 804.2H50.6M26.1 796.8V811.8M11.1 796.8V811.8M41.1 811.8V819.2M42.1 819.2H50.6M26.1 811.8V826.8M11.1 811.8V826.8M26.1 826.8V830.8M26.1 837.8V841.8M30.6 834.2H35.1M11.1 826.8V841.8M41.1 841.8V856.8M42.1 849.2H50.6M26.1 841.8V856.8M11.1 841.8V856.8M41.1 856.8V864.2M42.1 864.2H50.6M26.1 856.8V871.8M11.1 856.8V871.8M26.1 871.8V875.8M26.1 882.8V886.8M30.6 879.2H35.1M11.1 871.8V886.8M41.1 886.8V901.8M42.1 894.2H50.6M26.1 886.8V901.8M11.1 886.8V901.8M41.1 901.8V909.2M42.1 909.2H50.6M26.1 901.8V916.8M11.1 901.8V916.8" fill="none" stroke="#b0b0b0" stroke-width="1" stroke-dasharray="1 1"/><path d="M148.8 0V916" fill="none" stroke="#acacac" stroke-width="1" stroke-dasharray="1.5 1.5"/></svg>
<div class="rr" style="top:95.75px"><div class="ex" style="left:9.100000000000023px;top:3px"><i class="h"></i></div><span class="n" style="letter-spacing:-0.195px;left:24.8px">Record Header</span></div>
<div class="rr" style="top:110.75px"><span class="n" style="letter-spacing:-0.114px;left:39.8px">Signature</span><span class="v" style="letter-spacing:-1.127px">TES4</span></div>
<div class="rr" style="top:125.75px"><span class="n" style="letter-spacing:-0.419px;left:39.8px">Data Size</span><span class="v" style="letter-spacing:-0.505px">14705</span></div>
<div class="rr" style="top:140.75px"><div class="ex" style="left:24.100000000000023px;top:3px"><i class="h"></i></div><span class="n" style="letter-spacing:-0.180px;left:39.8px">Record Flags (sorted)</span><span class="v" style="letter-spacing:-1.170px">ESL</span></div>
<div class="rr" style="top:155.75px"><span class="n" style="letter-spacing:-1.170px;left:54.8px">ESL</span><span class="v" style="letter-spacing:-1.170px">ESL</span></div>
<div class="rr" style="top:170.75px"><span class="n" style="letter-spacing:-0.250px;left:39.8px">FormID</span><span class="v" style="letter-spacing:-0.190px">NULL - Null Reference [00000000]</span></div>
<div class="rr" style="top:185.75px"><span class="n" style="letter-spacing:-0.070px;left:39.8px">Version Control Info 1</span><span class="v" style="letter-spacing:0.059px">None</span></div>
<div class="rr" style="top:200.75px"><span class="n" style="letter-spacing:-0.189px;left:39.8px">Form Version</span><span class="v" style="letter-spacing:-0.505px">131</span></div>
<div class="rr" style="top:215.75px"><span class="n" style="letter-spacing:-0.070px;left:39.8px">Version Control Info 2</span><span class="v" style="letter-spacing:-0.454px">00 00</span></div>
<div class="rr d" style="top:230.75px"><div class="ex" style="left:9.100000000000023px;top:3px"><i class="h"></i></div><span class="n" style="letter-spacing:-0.290px;left:24.8px">HEDR - Header</span></div>
<div class="rr" style="top:245.75px"><span class="n" style="letter-spacing:-0.181px;left:39.8px">Version</span><span class="v" style="letter-spacing:-0.474px">1.000000</span></div>
<div class="rr" style="top:260.75px"><span class="n" style="letter-spacing:-0.090px;left:39.8px">Number of Records</span><span class="v" style="letter-spacing:-0.505px">4279</span></div>
<div class="rr" style="top:275.75px"><span class="n" style="letter-spacing:-0.055px;left:39.8px">Next Object ID</span><span class="v" style="letter-spacing:-0.505px">00000060</span></div>
<div class="rr g d" style="top:290.75px"><span class="n" style="letter-spacing:-0.198px;left:24.8px">OFST - Unknown</span></div>
<div class="rr g d" style="top:305.75px"><span class="n" style="letter-spacing:-0.216px;left:24.8px">DELE - Unknown</span></div>
<div class="rr d" style="top:320.75px"><span class="n" style="letter-spacing:0.095px;left:24.8px">CNAM - Author</span></div>
<div class="rr d" style="top:335.75px"><span class="n" style="letter-spacing:-0.015px;left:24.8px">SNAM - Description</span><span class="v" style="letter-spacing:-0.034px">ddpatch, turrets, skiphsh, dd morphs, bnslvypatch, satellite world map, boston weathers</span></div>
<div class="rr d" style="top:350.75px"><div class="ex" style="left:9.100000000000023px;top:3px"><i class="h"></i></div><span class="n" style="letter-spacing:-0.209px;left:24.8px">Master Files</span></div>
<div class="rr" style="top:365.75px"><div class="ex" style="left:24.100000000000023px;top:3px"><i class="h"></i></div><span class="n" style="letter-spacing:-0.162px;left:39.8px">Master File #0</span></div>
<div class="rr" style="top:380.75px"><span class="n" style="letter-spacing:-0.217px;left:54.8px">MAST - FileName</span><span class="v" style="letter-spacing:-0.168px">Fallout4.esm</span></div>
<div class="rr" style="top:395.75px"><span class="n" style="letter-spacing:-0.037px;left:54.8px">DATA - Unknown</span><span class="v" style="letter-spacing:-0.428px">00 00 00 00 00 00 00 00</span></div>
<div class="rr" style="top:410.75px"><div class="ex" style="left:24.100000000000023px;top:3px"><i class="h"></i></div><span class="n" style="letter-spacing:-0.162px;left:39.8px">Master File #1</span></div>
<div class="rr" style="top:425.75px"><span class="n" style="letter-spacing:-0.217px;left:54.8px">MAST - FileName</span><span class="v" style="letter-spacing:-0.314px">DLCRobot.esm</span></div>
<div class="rr" style="top:440.75px"><span class="n" style="letter-spacing:-0.037px;left:54.8px">DATA - Unknown</span><span class="v" style="letter-spacing:-0.428px">00 00 00 00 00 00 00 00</span></div>
<div class="rr" style="top:455.75px"><div class="ex" style="left:24.100000000000023px;top:3px"><i class="h"></i></div><span class="n" style="letter-spacing:-0.162px;left:39.8px">Master File #2</span></div>
<div class="rr" style="top:470.75px"><span class="n" style="letter-spacing:-0.217px;left:54.8px">MAST - FileName</span><span class="v" style="letter-spacing:-0.252px">DLCworkshop01.esm</span></div>
<div class="rr" style="top:485.75px"><span class="n" style="letter-spacing:-0.037px;left:54.8px">DATA - Unknown</span><span class="v" style="letter-spacing:-0.428px">00 00 00 00 00 00 00 00</span></div>
<div class="rr" style="top:500.75px"><div class="ex" style="left:24.100000000000023px;top:3px"><i class="h"></i></div><span class="n" style="letter-spacing:-0.162px;left:39.8px">Master File #3</span></div>
<div class="rr" style="top:515.75px"><span class="n" style="letter-spacing:-0.217px;left:54.8px">MAST - FileName</span><span class="v" style="letter-spacing:-0.460px">DLCCoast.esm</span></div>
<div class="rr" style="top:530.75px"><span class="n" style="letter-spacing:-0.037px;left:54.8px">DATA - Unknown</span><span class="v" style="letter-spacing:-0.428px">00 00 00 00 00 00 00 00</span></div>
<div class="rr" style="top:545.75px"><div class="ex" style="left:24.100000000000023px;top:3px"><i class="h"></i></div><span class="n" style="letter-spacing:-0.162px;left:39.8px">Master File #4</span></div>
<div class="rr" style="top:560.75px"><span class="n" style="letter-spacing:-0.217px;left:54.8px">MAST - FileName</span><span class="v" style="letter-spacing:-0.252px">DLCworkshop02.esm</span></div>
<div class="rr" style="top:575.75px"><span class="n" style="letter-spacing:-0.037px;left:54.8px">DATA - Unknown</span><span class="v" style="letter-spacing:-0.428px">00 00 00 00 00 00 00 00</span></div>
<div class="rr" style="top:590.75px"><div class="ex" style="left:24.100000000000023px;top:3px"><i class="h"></i></div><span class="n" style="letter-spacing:-0.162px;left:39.8px">Master File #5</span></div>
<div class="rr" style="top:605.75px"><span class="n" style="letter-spacing:-0.217px;left:54.8px">MAST - FileName</span><span class="v" style="letter-spacing:-0.252px">DLCworkshop03.esm</span></div>
<div class="rr" style="top:620.75px"><span class="n" style="letter-spacing:-0.037px;left:54.8px">DATA - Unknown</span><span class="v" style="letter-spacing:-0.428px">00 00 00 00 00 00 00 00</span></div>
<div class="rr" style="top:635.75px"><div class="ex" style="left:24.100000000000023px;top:3px"><i class="h"></i></div><span class="n" style="letter-spacing:-0.162px;left:39.8px">Master File #6</span></div>
<div class="rr" style="top:650.75px"><span class="n" style="letter-spacing:-0.217px;left:54.8px">MAST - FileName</span><span class="v" style="letter-spacing:-0.204px">DLCNukaWorld.esm</span></div>
<div class="rr" style="top:665.75px"><span class="n" style="letter-spacing:-0.037px;left:54.8px">DATA - Unknown</span><span class="v" style="letter-spacing:-0.428px">00 00 00 00 00 00 00 00</span></div>
<div class="rr" style="top:680.75px"><div class="ex" style="left:24.100000000000023px;top:3px"><i class="h"></i></div><span class="n" style="letter-spacing:-0.162px;left:39.8px">Master File #7</span></div>
<div class="rr" style="top:695.75px"><span class="n" style="letter-spacing:-0.217px;left:54.8px">MAST - FileName</span><span class="v" style="letter-spacing:-0.135px">HHFootsteps.esp</span></div>
<div class="rr" style="top:710.75px"><span class="n" style="letter-spacing:-0.037px;left:54.8px">DATA - Unknown</span><span class="v" style="letter-spacing:-0.428px">00 00 00 00 00 00 00 00</span></div>
<div class="rr" style="top:725.75px"><div class="ex" style="left:24.100000000000023px;top:3px"><i class="h"></i></div><span class="n" style="letter-spacing:-0.162px;left:39.8px">Master File #8</span></div>
<div class="rr" style="top:740.75px"><span class="n" style="letter-spacing:-0.217px;left:54.8px">MAST - FileName</span><span class="v" style="letter-spacing:-0.148px">ArmorKeywords.esm</span></div>
<div class="rr" style="top:755.75px"><span class="n" style="letter-spacing:-0.037px;left:54.8px">DATA - Unknown</span><span class="v" style="letter-spacing:-0.428px">00 00 00 00 00 00 00 00</span></div>
<div class="rr" style="top:770.75px"><div class="ex" style="left:24.100000000000023px;top:3px"><i class="h"></i></div><span class="n" style="letter-spacing:-0.162px;left:39.8px">Master File #9</span></div>
<div class="rr" style="top:785.75px"><span class="n" style="letter-spacing:-0.217px;left:54.8px">MAST - FileName</span><span class="v" style="letter-spacing:-0.223px">TortureDevices.esm</span></div>
<div class="rr" style="top:800.75px"><span class="n" style="letter-spacing:-0.037px;left:54.8px">DATA - Unknown</span><span class="v" style="letter-spacing:-0.428px">00 00 00 00 00 00 00 00</span></div>
<div class="rr" style="top:815.75px"><div class="ex" style="left:24.100000000000023px;top:3px"><i class="h"></i></div><span class="n" style="letter-spacing:-0.185px;left:39.8px">Master File #10</span></div>
<div class="rr" style="top:830.75px"><span class="n" style="letter-spacing:-0.217px;left:54.8px">MAST - FileName</span><span class="v" style="letter-spacing:-0.251px">Devious Devices.esm</span></div>
<div class="rr" style="top:845.75px"><span class="n" style="letter-spacing:-0.037px;left:54.8px">DATA - Unknown</span><span class="v" style="letter-spacing:-0.428px">00 00 00 00 00 00 00 00</span></div>
<div class="rr" style="top:860.75px"><div class="ex" style="left:24.100000000000023px;top:3px"><i class="h"></i></div><span class="n" style="letter-spacing:-0.185px;left:39.8px">Master File #11</span></div>
<div class="rr" style="top:875.75px"><span class="n" style="letter-spacing:-0.217px;left:54.8px">MAST - FileName</span><span class="v" style="letter-spacing:-0.291px">KSHairdos.esp</span></div>
<div class="rr" style="top:890.75px"><span class="n" style="letter-spacing:-0.037px;left:54.8px">DATA - Unknown</span><span class="v" style="letter-spacing:-0.428px">00 00 00 00 00 00 00 00</span></div>
<div class="rr" style="top:905.75px"><div class="ex" style="left:24.100000000000023px;top:3px"><i class="h"></i></div><span class="n" style="letter-spacing:-0.185px;left:39.8px">Master File #12</span></div>
<div class="rr" style="top:920.75px"><span class="n" style="letter-spacing:-0.217px;left:54.8px">MAST - FileName</span><span class="v" style="letter-spacing:-0.309px">The Eyes Of Beauty.esp</span></div>
<div class="rr" style="top:935.75px"><span class="n" style="letter-spacing:-0.037px;left:54.8px">DATA - Unknown</span><span class="v" style="letter-spacing:-0.428px">00 00 00 00 00 00 00 00</span></div>
<div class="rr" style="top:950.75px"><div class="ex" style="left:24.100000000000023px;top:3px"><i class="h"></i></div><span class="n" style="letter-spacing:-0.185px;left:39.8px">Master File #13</span></div>
<div class="rr" style="top:965.75px"><span class="n" style="letter-spacing:-0.217px;left:54.8px">MAST - FileName</span><span class="v" style="letter-spacing:-0.173px">WorkshopRearranged.esp</span></div>
<div class="rr" style="top:980.75px"><span class="n" style="letter-spacing:-0.037px;left:54.8px">DATA - Unknown</span><span class="v" style="letter-spacing:-0.428px">00 00 00 00 00 00 00 00</span></div>
</div>
<!-- right filter bar -->
<div id="fbar">
<span style="letter-spacing:-0.118px;left:934.5px;top:53.5px">Filter by <u>N</u>ame:</span>
<div class="inp" style="left:999px;top:52px;width:102px;height:17px"></div>
<div class="combo" style="left:1105px;top:52px;width:45px;height:17px"><span style="letter-spacing:-0.005px">and</span><svg width="8" height="5" viewBox="0 0 8 5" style="left:33px;top:5.5px"><path d="M.7.7L4 4l3.3-3.3" fill="none" stroke="#444" stroke-width="1"/></svg></div>
<span style="letter-spacing:-0.169px;left:1154.5px;top:53.5px">by <u>V</u>alue:</span>
<div class="inp" style="left:1194px;top:52px;width:103px;height:17px"></div>
<span style="letter-spacing:-0.380px;left:1303.5px;top:54px">Keep</span>
<i class="cb" style="left:1327.5px;top:54.7px"></i><span style="letter-spacing:0.092px;left:1340px;top:53.8px">children</span>
<i class="cb" style="left:1377.5px;top:54.7px"></i><span style="letter-spacing:-0.002px;left:1390px;top:53.8px">siblings</span>
<span style="letter-spacing:-0.130px;left:1871.5px;top:54px">Legend</span>
</div>
<!-- tooltip -->
<svg id="tip" style="left:1420px;top:38px" width="240" height="46" viewBox="0 0 240 46"><defs><filter id="ts" x="-5%" y="-20%" width="112%" height="150%"><feGaussianBlur stdDeviation="1.2"/></filter></defs>
<path d="M12 14.5H209l9-8.5v8.5h7.5a4.5 4.5 0 0 1 4.500 4.500v15a4.500 4.500 0 0 1-4.500 4.500H12a4.500 4.500 0 0 1-4.500-4.500v-15A4.500 4.500 0 0 1 12 14.500Z" transform="translate(2.200 2.200)" fill="#000" opacity=".55" filter="url(#ts)"/>
<path d="M12 13.500H209.500l9-8.500v8.500h7a4.500 4.500 0 0 1 4.500 4.500v15.500a4.500 4.500 0 0 1-4.500 4.500H12a4.500 4.500 0 0 1-4.500-4.500V18A4.500 4.500 0 0 1 12 13.500Z" fill="#fff" stroke="#2a2a2a" stroke-width="1"/>
<path d="M217.500 23l5.500 5.500M223 23l-5.500 5.500" stroke="#7a7a7a" stroke-width="1.200"/>
</svg>
<span style="letter-spacing:-0.132px;left:1436.3px;top:56px;color:#111">A newer version is available on NexusMods: 4.1.5</span>
<!-- scrollbars -->
<div class="sb" style="left:911.500px;top:87px;width:12px;height:916px">
<svg width="12" height="12" viewBox="0 0 12 12" style="left:0;top:0"><path d="M3 7.300l3-3 3 3" fill="none" stroke="#404040" stroke-width="1.500"/></svg>
<i style="left:0;top:751px;width:12px;height:145px;background:#cdcdcd"></i>
<svg width="12" height="12" viewBox="0 0 12 12" style="left:0;top:904px"><path d="M3 4.700l3 3 3-3" fill="none" stroke="#404040" stroke-width="1.500"/></svg>
</div>
<div class="sb" style="left:1900.500px;top:96px;width:12px;height:897px">
<svg width="12" height="12" viewBox="0 0 12 12" style="left:0;top:0"><path d="M3 7.300l3-3 3 3" fill="none" stroke="#404040" stroke-width="1.500"/></svg>
<i style="left:0;top:13px;width:12px;height:15px;background:#cdcdcd"></i>
<svg width="12" height="12" viewBox="0 0 12 12" style="left:0;top:884px"><path d="M3 4.700l3 3 3-3" fill="none" stroke="#404040" stroke-width="1.500"/></svg>
</div>
<div class="sb" style="left:934px;top:993.500px;width:966px;height:12px">
<svg width="12" height="12" viewBox="0 0 12 12" style="left:0;top:0"><path d="M7.300 3l-3 3 3 3" fill="none" stroke="#404040" stroke-width="1.500"/></svg>
<i style="left:12px;top:0;width:600px;height:12px;background:#cdcdcd"></i>
</div>
<i style="left:1900.500px;top:993.500px;width:12px;height:12px;background:#f0f0f0"></i>
<!-- tabs -->
<div id="tabs">
<div class="tab act" style="left:930px;width:37.500px"><span style="letter-spacing:-0.189px">View</span></div>
<div class="tab" style="left:968px;width:45.500px"><span style="letter-spacing:-0.346px">Messages</span></div>
<div class="tab" style="left:1013.500px;width:56px"><span style="letter-spacing:0.134px">Information</span></div>
<div class="tab" style="left:1069.500px;width:55.500px"><span style="letter-spacing:-0.048px">What's New</span></div>
</div>
<!-- bottom-left filter -->
<span style="letter-spacing:-0.067px;left:12px;top:1011px">F<u>i</u>lter by filename:</span>
<div class="inp" style="left:84.500px;top:1010px;width:840.500px;height:16.500px;border-color:#7a7a7a #8a8a8a #8a8a8a #7a7a7a"></div>
<!-- status -->
<i style="left:0;top:1028.8px;width:1920px;height:1.5px;background:#f8f8f8"></i>
<span style="letter-spacing:-0.081px;left:4px;top:1032.500px">[00:21] Background Loader: finished</span>

<div id="menu">
<div class="mi" style="top:1.25px"><span style="letter-spacing:-0.156px">Compare to...</span></div>
<div class="mi" style="top:17.75px"><span style="letter-spacing:-0.113px">Create delta patch using...</span></div>
<i class="sep" style="top:36.5px"></i>
<div class="mi" style="top:39.5px"><span style="letter-spacing:-0.213px">Remove Filter</span></div>
<div class="mi" style="top:56.0px"><span style="letter-spacing:-0.001px">Apply Filter</span></div>
<div class="mi" style="top:72.5px"><span style="letter-spacing:-0.032px">Apply Filter for Cleaning</span></div>
<div class="mi" style="top:89.0px"><span style="letter-spacing:-0.001px">Apply Filter to show Conflicts</span></div>
<i class="sep" style="top:107.75px"></i>
<div class="mi" style="top:110.75px"><span style="letter-spacing:-0.045px">Apply Filter (selected files only)</span></div>
<div class="mi" style="top:127.25px"><span style="letter-spacing:-0.049px">Apply Filter for Cleaning (selected files only)</span></div>
<div class="mi" style="top:143.75px"><span style="letter-spacing:-0.030px">Apply Filter to show Conflicts (selected files only)</span></div>
<i class="sep" style="top:162.5px"></i>
<div class="mi" style="top:165.5px"><span style="letter-spacing:-0.204px">Check for Errors</span></div>
<div class="mi" style="top:182.0px"><span style="letter-spacing:-0.173px">Check for Circular Leveled Lists</span></div>
<i class="sep" style="top:200.75px"></i>
<div class="mi" style="top:203.75px"><span style="letter-spacing:-0.178px">Renumber FormIDs from...</span></div>
<div class="mi" style="top:220.25px"><span style="letter-spacing:-0.103px">Inject Forms into master...</span></div>
<i class="sep" style="top:239.0px"></i>
<div class="mi hot" style="top:242.0px"><span style="letter-spacing:-0.051px">Apply Script...</span></div>
<i class="sep" style="top:260.75px"></i>
<div class="mi" style="top:263.75px"><span style="letter-spacing:-0.204px">Undelete and Disable References</span></div>
<div class="mi" style="top:280.25px"><span style="letter-spacing:-0.061px">Remove &quot;Identical to Master&quot; records</span></div>
<i class="sep" style="top:299.0px"></i>
<div class="mi" style="top:302.0px"><span style="letter-spacing:0.162px">Add</span><svg class="ar" width="5" height="8" viewBox="0 0 5 8"><path d="M1 0.8 L4 4 L1 7.2" fill="none" stroke="#333" stroke-width="1"/></svg></div>
<div class="mi" style="top:318.5px"><span style="letter-spacing:0.152px">Mark Modified</span></div>
<i class="sep" style="top:337.25px"></i>
<div class="mi" style="top:340.25px"><span style="letter-spacing:-0.126px">Add Masters...</span></div>
<div class="mi" style="top:356.75px"><span style="letter-spacing:-0.043px">Sort Masters (to match current load order)</span></div>
<div class="mi" style="top:373.25px"><span style="letter-spacing:-0.170px">Clean Masters (= Remove all unused Masters)</span></div>
<i class="sep" style="top:392.0px"></i>
<div class="mi" style="top:395.0px"><span style="letter-spacing:-0.033px">Edit ModGroup...</span></div>
<div class="mi" style="top:411.5px"><span style="letter-spacing:-0.107px">Delete ModGroups...</span></div>
<div class="mi" style="top:428.0px"><span style="letter-spacing:-0.194px">Update CRC in ModGroups...</span></div>
<i class="sep" style="top:446.75px"></i>
<div class="mi" style="top:449.75px"><span style="letter-spacing:0.122px">Hidden</span></div>
<i class="sep" style="top:468.5px"></i>
<div class="mi" style="top:471.5px"><span style="letter-spacing:-0.002px">Other</span><svg class="ar" width="5" height="8" viewBox="0 0 5 8"><path d="M1 0.8 L4 4 L1 7.2" fill="none" stroke="#333" stroke-width="1"/></svg></div>
</div>
<i id="pipsh" style="left:1432.75px;top:766px;width:465.25px;height:261.5px;box-shadow:0 1px 7px rgba(0,0,0,.35)"></i>
<svg id="pip" style="left:1432.75px;top:766px" width="465.25" height="261.5" viewBox="0 0 1917 1080" preserveAspectRatio="none">
<defs>
<clipPath id="cL1"><rect x="30" y="0" width="172" height="1080"/></clipPath>
<clipPath id="cL2"><rect x="232" y="0" width="111" height="1080"/></clipPath>
<clipPath id="cW1"><polygon points="620,205 705,290 705,690 620,730"/></clipPath>
<clipPath id="cW2"><polygon points="1338,185 1418,120 1418,800 1338,750"/></clipPath>
<clipPath id="cW3"><polygon points="1633,0 1917,0 1917,975 1633,840"/></clipPath>
<linearGradient id="gB" x1="0" y1="0" x2="0" y2="1"><stop offset="0" stop-color="#8a9da9"/><stop offset=".5" stop-color="#93a4ad"/><stop offset="1" stop-color="#a7b4b8"/></linearGradient>
<linearGradient id="gF" x1="0" y1="0" x2="1" y2="1"><stop offset="0" stop-color="#828e96"/><stop offset="1" stop-color="#56657a"/></linearGradient>
<filter id="bl"><feGaussianBlur stdDeviation="2.5"/></filter>
</defs>
<g filter="url(#bl)">
<rect x="-20" y="-20" width="1960" height="1120" fill="#74837d"/>
<polygon points="432,0 1436,0 1436,110 1150,300 1150,330 700,330 700,270 617,200 617,135 432,135" fill="#82938e" />
<g stroke="#566562" stroke-width="2.5" fill="none"><path d="M450 38H1420M500 95H1380M560 130H1340M640 160H1300M640 185H1270M660 205H1250M690 222H1230M700 240H1215M700 255H1200"/></g>
<g stroke="#1e2422" stroke-width="5" fill="none"><path d="M436 0L562 135M686 0L745 130M1183 0L1124 128M1418 10L1160 300"/></g>
<polygon points="700,270 1200,280 1200,760 700,760" fill="#6f7e78" />
<polygon points="620,205 705,290 705,690 620,730" fill="#a7b7cb" />
<path d="M620 205L705 285L705 291L620 213ZM620 222L705 297L705 303L620 230ZM620 239L705 310L705 316L620 247ZM620 256L705 322L705 328L620 264ZM620 273L705 335L705 340L620 281ZM620 290L705 347L705 353L620 298ZM620 307L705 359L705 365L620 315ZM620 324L705 372L705 378L620 332ZM620 341L705 384L705 390L620 349ZM620 358L705 397L705 402L620 366ZM620 375L705 409L705 415L620 383ZM620 392L705 421L705 427L620 400ZM620 409L705 434L705 440L620 417ZM620 426L705 446L705 452L620 434ZM620 443L705 458L705 464L620 451ZM620 460L705 471L705 477L620 468ZM620 477L705 483L705 489L620 485ZM620 494L705 496L705 501L620 502ZM620 511L705 508L705 514L620 519ZM620 528L705 520L705 526L620 536ZM620 545L705 533L705 539L620 553ZM620 562L705 545L705 551L620 570ZM620 579L705 558L705 563L620 587ZM620 596L705 570L705 576L620 604ZM620 613L705 582L705 588L620 621ZM620 630L705 595L705 601L620 638ZM620 647L705 607L705 613L620 655ZM620 664L705 619L705 625L620 672ZM620 681L705 632L705 638L620 689ZM620 698L705 644L705 650L620 706ZM620 715L705 657L705 662L620 723ZM620 732L705 669L705 675L620 740Z" fill="#eef2f4" opacity="0.85" clip-path="url(#cW1)"/>
<polygon points="645,600 700,595 700,672 645,690" fill="#3d4a6b" opacity=".75"/>
<polygon points="620,712 705,672 705,700 620,745" fill="#dfe5e8" />
<polygon points="342,0 432,0 432,1080 342,1080" fill="#7f8e87" />
<path d="M432 135H602Q617 135 617 150V1080H432Z" fill="#65746d"/>
<polygon points="435,630 495,655 495,760 435,778" fill="#b6bea6" />
<polygon points="435,782 520,782 530,812 435,812" fill="#aab5a0" />
<polygon points="435,812 530,812 530,900 435,900" fill="#9aa692" />
<rect x="0" y="0" width="343" height="1080" fill="url(#gB)"/>
<rect x="0" y="0" width="30" height="1080" fill="#667472"/>
<rect x="202" y="0" width="30" height="1080" fill="#717f7d"/>
<path d="M30 -52L202 4L202 12L30 -43ZM30 -7L202 44L202 53L30 2ZM30 39L202 85L202 94L30 48ZM30 84L202 126L202 134L30 93ZM30 129L202 167L202 175L30 138ZM30 174L202 208L202 216L30 184ZM30 220L202 249L202 257L30 229ZM30 265L202 290L202 298L30 274ZM30 310L202 331L202 339L30 319ZM30 356L202 372L202 380L30 365ZM30 401L202 413L202 421L30 410ZM30 446L202 453L202 462L30 455ZM30 492L202 494L202 502L30 501ZM30 537L202 535L202 543L30 546ZM30 582L202 576L202 584L30 591ZM30 628L202 617L202 625L30 636ZM30 673L202 658L202 666L30 682ZM30 718L202 699L202 707L30 727ZM30 763L202 740L202 748L30 772ZM30 809L202 781L202 789L30 818ZM30 854L202 822L202 830L30 863ZM30 899L202 862L202 871L30 908ZM30 945L202 903L202 911L30 954ZM30 990L202 944L202 952L30 999ZM30 1035L202 985L202 993L30 1044ZM30 1080L202 1026L202 1034L30 1089ZM30 1126L202 1067L202 1075L30 1135ZM30 1171L202 1108L202 1116L30 1180ZM30 1216L202 1149L202 1157L30 1225ZM30 1262L202 1190L202 1198L30 1271Z" fill="#7c8d98" opacity="0.7" clip-path="url(#cL1)"/>
<path d="M30 -52L343 49L343 57L30 -43ZM30 -7L343 86L343 94L30 2ZM30 39L343 124L343 131L30 48ZM30 84L343 161L343 168L30 93ZM30 129L343 198L343 206L30 138ZM30 174L343 236L343 243L30 184ZM30 220L343 273L343 280L30 229ZM30 265L343 310L343 318L30 274ZM30 310L343 347L343 355L30 319ZM30 356L343 385L343 392L30 365ZM30 401L343 422L343 429L30 410ZM30 446L343 459L343 467L30 455ZM30 492L343 497L343 504L30 501ZM30 537L343 534L343 541L30 546ZM30 582L343 571L343 579L30 591ZM30 628L343 608L343 616L30 636ZM30 673L343 646L343 653L30 682ZM30 718L343 683L343 690L30 727ZM30 763L343 720L343 728L30 772ZM30 809L343 758L343 765L30 818ZM30 854L343 795L343 802L30 863ZM30 899L343 832L343 840L30 908ZM30 945L343 870L343 877L30 954ZM30 990L343 907L343 914L30 999ZM30 1035L343 944L343 952L30 1044ZM30 1080L343 981L343 989L30 1089ZM30 1126L343 1019L343 1026L30 1135ZM30 1171L343 1056L343 1063L30 1180ZM30 1216L343 1093L343 1101L30 1225ZM30 1262L343 1131L343 1138L30 1271Z" fill="#7c8d98" opacity="0.7" clip-path="url(#cL2)"/>
<path d="M30 -65L202 -8L202 1L30 -55ZM30 -20L202 33L202 42L30 -10ZM30 26L202 74L202 83L30 36ZM30 71L202 115L202 124L30 81ZM30 116L202 155L202 164L30 126ZM30 162L202 196L202 205L30 172ZM30 207L202 237L202 246L30 217ZM30 252L202 278L202 287L30 262ZM30 297L202 319L202 328L30 307ZM30 343L202 360L202 369L30 353ZM30 388L202 401L202 410L30 398ZM30 433L202 442L202 451L30 443ZM30 479L202 483L202 492L30 489ZM30 524L202 524L202 533L30 534ZM30 569L202 564L202 573L30 579ZM30 614L202 605L202 614L30 624ZM30 660L202 646L202 655L30 670ZM30 705L202 687L202 696L30 715ZM30 750L202 728L202 737L30 760ZM30 796L202 769L202 778L30 806ZM30 841L202 810L202 819L30 851ZM30 886L202 851L202 860L30 896ZM30 932L202 892L202 901L30 942ZM30 977L202 933L202 942L30 987ZM30 1022L202 973L202 982L30 1032ZM30 1067L202 1014L202 1023L30 1077ZM30 1113L202 1055L202 1064L30 1123ZM30 1158L202 1096L202 1105L30 1168ZM30 1203L202 1137L202 1146L30 1213ZM30 1249L202 1178L202 1187L30 1259ZM30 1294L202 1219L202 1228L30 1304Z" fill="#e3e8d6" opacity="1" clip-path="url(#cL1)"/>
<path d="M30 -65L343 38L343 47L30 -55ZM30 -20L343 76L343 84L30 -10ZM30 26L343 113L343 121L30 36ZM30 71L343 150L343 159L30 81ZM30 116L343 188L343 196L30 126ZM30 162L343 225L343 233L30 172ZM30 207L343 262L343 270L30 217ZM30 252L343 299L343 308L30 262ZM30 297L343 337L343 345L30 307ZM30 343L343 374L343 382L30 353ZM30 388L343 411L343 420L30 398ZM30 433L343 449L343 457L30 443ZM30 479L343 486L343 494L30 489ZM30 524L343 523L343 531L30 534ZM30 569L343 560L343 569L30 579ZM30 614L343 598L343 606L30 624ZM30 660L343 635L343 643L30 670ZM30 705L343 672L343 681L30 715ZM30 750L343 710L343 718L30 760ZM30 796L343 747L343 755L30 806ZM30 841L343 784L343 792L30 851ZM30 886L343 822L343 830L30 896ZM30 932L343 859L343 867L30 942ZM30 977L343 896L343 904L30 987ZM30 1022L343 933L343 942L30 1032ZM30 1067L343 971L343 979L30 1077ZM30 1113L343 1008L343 1016L30 1123ZM30 1158L343 1045L343 1053L30 1168ZM30 1203L343 1083L343 1091L30 1213ZM30 1249L343 1120L343 1128L30 1259ZM30 1294L343 1157L343 1165L30 1304Z" fill="#e3e8d6" opacity="1" clip-path="url(#cL2)"/>
<polygon points="1196,280 1268,215 1268,800 1196,760" fill="#a7b2a2" />
<polygon points="1268,215 1273,168 1338,168 1338,800 1268,800" fill="#b4bdad" />
<polygon points="1338,185 1418,120 1418,800 1338,750" fill="#8fa0b0" />
<path d="M1338 104L1418 26L1418 39L1338 115ZM1338 128L1418 55L1418 68L1338 139ZM1338 152L1418 83L1418 96L1338 163ZM1338 176L1418 112L1418 125L1338 187ZM1338 200L1418 141L1418 154L1338 211ZM1338 224L1418 169L1418 183L1338 235ZM1338 248L1418 198L1418 211L1338 259ZM1338 272L1418 227L1418 240L1338 283ZM1338 296L1418 256L1418 269L1338 307ZM1338 320L1418 284L1418 298L1338 331ZM1338 344L1418 313L1418 326L1338 355ZM1338 368L1418 342L1418 355L1338 379ZM1338 392L1418 371L1418 384L1338 403ZM1338 416L1418 399L1418 413L1338 427ZM1338 440L1418 428L1418 441L1338 451ZM1338 464L1418 457L1418 470L1338 475ZM1338 488L1418 486L1418 499L1338 499ZM1338 512L1418 514L1418 528L1338 523ZM1338 536L1418 543L1418 556L1338 547ZM1338 560L1418 572L1418 585L1338 571ZM1338 584L1418 601L1418 614L1338 595ZM1338 608L1418 629L1418 643L1338 619ZM1338 632L1418 658L1418 671L1338 643ZM1338 656L1418 687L1418 700L1338 667ZM1338 680L1418 716L1418 729L1338 691ZM1338 704L1418 744L1418 757L1338 715ZM1338 728L1418 773L1418 786L1338 739ZM1338 752L1418 802L1418 815L1338 763ZM1338 776L1418 831L1418 844L1338 787Z" fill="#e8ecea" opacity="0.92" clip-path="url(#cW2)"/>
<path d="M1381 152V790" stroke="#98a59f" stroke-width="8"/>
<polygon points="1418,0 1438,0 1438,900 1418,900" fill="#88968f" />
<rect x="1436" y="0" width="156" height="1080" fill="#a2ad9c"/>
<rect x="1590" y="0" width="40" height="1080" fill="#8c999a"/>
<polygon points="1590,820 1633,840 1917,975 1917,1080 1590,1080" fill="url(#gF)" />
<polygon points="1633,0 1917,0 1917,975 1633,840" fill="#7890bc" />
<polygon points="1700,115 1822,100 1822,700 1700,700" fill="#77777a" />
<polygon points="1770,180 1822,170 1822,690 1770,695" fill="#d9d7b6" />
<polygon points="1842,0 1917,0 1917,700 1842,700" fill="#d6d8b8" opacity=".8"/>
<polygon points="1633,700 1917,712 1917,975 1633,840" fill="#333e58" />
<polygon points="1633,800 1917,900 1917,960 1633,838" fill="#59554f" />
<polygon points="1652,720 1668,720 1668,830 1652,825" fill="#b07a3a" />
<polygon points="1866,800 1886,802 1886,905 1866,898" fill="#b07a3a" />
<polygon points="1690,712 1760,715 1760,800 1690,790" fill="#1e2433" />
<polygon points="1780,730 1840,735 1840,830 1780,815" fill="#1e2433" />
<path d="M1633 6L1917 -71L1917 -54L1633 21ZM1633 36L1917 -37L1917 -19L1633 51ZM1633 66L1917 -2L1917 15L1633 81ZM1633 96L1917 32L1917 49L1633 111ZM1633 126L1917 66L1917 83L1633 141ZM1633 156L1917 101L1917 118L1633 171ZM1633 186L1917 135L1917 152L1633 201ZM1633 216L1917 169L1917 186L1633 231ZM1633 246L1917 203L1917 221L1633 261ZM1633 276L1917 238L1917 255L1633 291ZM1633 306L1917 272L1917 289L1633 321ZM1633 336L1917 306L1917 323L1633 351ZM1633 366L1917 340L1917 358L1633 381ZM1633 396L1917 375L1917 392L1633 411ZM1633 426L1917 409L1917 426L1633 441ZM1633 456L1917 443L1917 460L1633 471ZM1633 486L1917 478L1917 495L1633 501ZM1633 516L1917 512L1917 529L1633 531ZM1633 546L1917 546L1917 563L1633 561ZM1633 576L1917 580L1917 598L1633 591ZM1633 606L1917 615L1917 632L1633 621ZM1633 636L1917 649L1917 666L1633 651ZM1633 666L1917 683L1917 700L1633 681ZM1633 696L1917 718L1917 735L1633 711Z" fill="#bcc8da" opacity="0.9" clip-path="url(#cW3)"/>
<path d="M1833 0V935" stroke="#a9b5ae" stroke-width="10"/>
<path d="M1629 0V840" stroke="#d3dac8" stroke-width="5"/>
<path d="M1633 850L1917 985" stroke="#5f8fc0" stroke-width="8"/>
<path d="M1633 838L1917 972" stroke="#cfd8c0" stroke-width="11"/>
</g>
<g filter="url(#bl)">
<polygon points="348,1080 358,990 372,940 400,905 450,882 620,790 700,738 740,700 782,650 830,700 800,1080" fill="#1d1b1f" />
<polygon points="1070,1080 1100,800 1105,640 1095,612 1211,685 1341,760 1461,820 1586,865 1651,900 1681,955 1696,1080" fill="#1d1b1f" />
<polygon points="780,650 800,655 880,750 940,800 1010,750 1095,630 1112,700 1100,800 1075,1080 800,1080 792,850" fill="#dce6df" />
<polygon points="1075,760 1100,790 1085,1000 1050,1080 1020,1080 1060,900" fill="#c9c1da" />
<polygon points="785,590 830,650 900,695 960,700 1040,660 1092,590 1098,640 1010,750 940,805 880,750 800,660" fill="#8e5229" />
<polygon points="858,852 900,830 962,842 988,866 962,940 1003,1080 868,1080 897,940" fill="#5a1f18" />
<polygon points="740,380 751,416 765,374 789,319 796,244 1067,237 1087,306 1105,374 1128,395 1122,440 1101,485 1087,553 1060,636 1019,677 957,705 895,705 840,677 796,622 778,567 758,498 745,440" fill="#b98670" />
<polygon points="1067,237 1087,306 1105,374 1128,395 1122,440 1101,485 1087,553 1060,636 1019,677 1033,636 1040,588 1074,498 1087,430 1043,374 1036,340" fill="#9b592d" />
<polygon points="929,443 971,526 936,540 926,498" fill="#a7622f" />
<polygon points="893,610 980,612 962,636 915,638" fill="#a55c31" />
<polygon points="730,429 713,374 706,292 713,223 706,178 734,175 737,140 768,103 775,120 796,75 806,90 813,51 835,70 857,30 880,62 909,30 930,58 950,47 965,60 984,37 1000,58 1019,44 1046,68 1056,88 1084,82 1082,108 1094,120 1129,134 1122,150 1139,165 1136,185 1153,196 1149,244 1159,292 1153,361 1129,402 1105,374 1087,306 1067,237 1032,292 1019,340 1005,292 984,347 971,292 950,354 929,292 909,347 888,292 868,326 847,278 826,306 813,250 796,244 789,319 765,374 751,416" fill="#16151a" />
<ellipse cx="735" cy="452" rx="21" ry="40" fill="#15141a"/><ellipse cx="1123" cy="450" rx="18" ry="30" fill="#15141a"/>
<g fill="none" stroke="#2a2830" stroke-width="3"><path d="M745 480Q770 560 790 640Q830 760 925 825"/><path d="M1110 470Q1105 560 1092 640Q1040 780 935 830"/><path d="M705 430Q690 300 720 240" stroke="#5b5f99"/><path d="M1150 420Q1165 320 1150 260" stroke="#5b5f99"/></g>
<g fill="none" stroke="#17151a" stroke-linecap="round"><path d="M770 394Q820 376 870 390L888 402" stroke-width="14"/><path d="M964 402Q1010 385 1087 381" stroke-width="14"/><path d="M796 423Q830 436 875 430" stroke-width="5"/><path d="M972 414Q1010 400 1060 410" stroke-width="6"/><path d="M872 595Q930 588 1005 598" stroke-width="5"/><path d="M932 450L924 500" stroke-width="3"/></g>
<ellipse cx="1018" cy="424" rx="34" ry="10" fill="#cfd8dc"/><ellipse cx="1005" cy="423" rx="13" ry="10" fill="#54708c"/>
</g>
<text x="1327" y="1043" font-family="Liberation Sans,sans-serif" font-size="62" fill="#c9cbcd" fill-opacity=".92" stroke="#333" stroke-opacity=".7" stroke-width="3" paint-order="stroke" textLength="582" lengthAdjust="spacingAndGlyphs">YouTube.com/MHRcartoon</text>
</svg>
<div id="tb">
<svg style="left:12px;top:8.500px" width="13" height="13" viewBox="0 0 13 13"><path d="M0 1.800L5.300 1v5H0zM6 .900L12.800 0v6H6zM0 6.800h5.300v5L0 11zM6 6.800h6.800v6L6 11.900z" fill="#fff"/></svg>
<svg style="left:45px;top:4px" width="22" height="22" viewBox="0 0 22 22"><circle cx="11" cy="10.500" r="8.300" fill="none" stroke="#e0234e" stroke-width="2"/><ellipse cx="11" cy="10.500" rx="4" ry="7.300" fill="none" stroke="#e0234e" stroke-width="1.600"/></svg>
<svg style="left:84px;top:7px" width="18" height="16" viewBox="0 0 18 16"><path d="M.5 2.500Q.5 1.500 1.500 1.500H6l1.500 1.800H16q1 0 1 1V13H.5z" fill="#f2b52b"/><path d="M.5 4.500H17v9.500H.5z" fill="#fcd45e"/><path d="M4 14v-4.500h9.500V14h-2.500v-2.500H6.500V14z" fill="#3a96dd"/></svg>
<i style="left:112px;top:0;width:36px;height:30px;background:#0f4a7f"></i>
<svg style="left:121px;top:5px" width="18" height="18" viewBox="0 0 18 18"><circle cx="9" cy="9" r="8.300" fill="#908f86" stroke="#5b5a55" stroke-width="1"/><rect x="7.800" y="3" width="2.600" height="11.500" fill="#e6d07a"/><circle cx="9" cy="4" r="2" fill="#f0dc8c"/><rect x="3.500" y="5" width="3.300" height="4" fill="#c8202a"/><rect x="11.200" y="5" width="3.300" height="4" fill="#c8202a"/><rect x="4.500" y="9.800" width="2.800" height="3.500" fill="#2f4fa8"/><rect x="10.700" y="9.800" width="2.800" height="3.500" fill="#2f4fa8"/></svg>
<i style="left:41.500px;top:28.500px;width:30px;height:1.500px;background:#8fc3ee"></i>
<i style="left:78px;top:28.500px;width:30px;height:1.500px;background:#8fc3ee"></i>
<i style="left:112px;top:28.500px;width:36px;height:1.500px;background:#8fc3ee"></i>
<svg style="left:1754px;top:9px" width="60" height="14" viewBox="0 0 60 14"><g fill="none" stroke="#fff" stroke-width="1"><path d="M2 9l4-4 4 4"/><path d="M19.500 2.500h10v6.500h-10zM22 11.500h5M24.500 9v2.500"/><path d="M18 1.500v5" stroke-width="1.300"/><path d="M36.500 5.500h2l3-2.500v8l-3-2.500h-2z"/><path d="M43.500 4.500q1.500 2.500 0 5" opacity=".9"/><path d="M45.500 3q2.500 4 0 8" opacity=".45"/></g></svg>
<span style="letter-spacing:-0.918px;left:1810.500px;top:7px;color:#fff;font-size:9px">РУС</span>
<span style="letter-spacing:-0.181px;left:1839px;top:.500px;color:#fff;font-size:9px">5:44 AM</span>
<span style="letter-spacing:-0.115px;left:1836.500px;top:14.500px;color:#fff;font-size:9px">1/12/2024</span>
<svg style="left:1887px;top:7px" width="16" height="16" viewBox="0 0 16 16"><path d="M1.500 1.500h12.500v9.500h-3.500v3l-3-3h-6z" fill="none" stroke="#fff" stroke-width="1"/></svg>
<i style="left:1916.500px;top:0;width:1px;height:30px;background:#4a5a68"></i>
</div>

</body></html>
